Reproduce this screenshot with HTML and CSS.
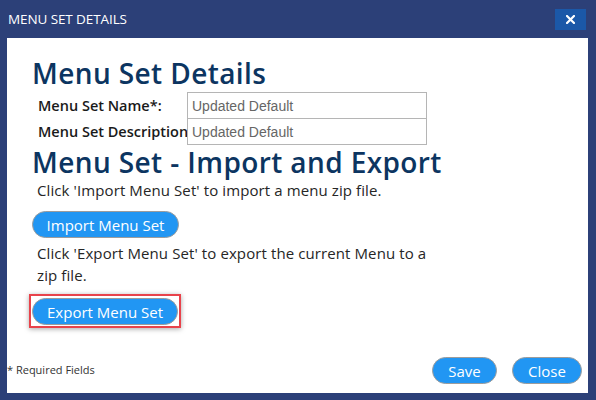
FILE: index.html
```html
<!DOCTYPE html>
<html>
<head>
<meta charset="utf-8">
<link rel="stylesheet" href="styles.css">
</head>
<body>
<div class="dialog">
  <div class="titlebar">
    <span class="title">MENU SET DETAILS</span>
    <button class="close-x" aria-label="Close"><svg width="9" height="9" viewBox="0 0 9 9"><path d="M1 1L8 8M8 1L1 8" stroke="#ffffff" stroke-width="2.2" stroke-linecap="square"/></svg></button>
  </div>
  <div class="panel">
    <div class="content">
      <h1 class="heading">Menu Set Details</h1>
      <div class="form-row">
        <label class="label">Menu Set Name*:</label>
        <input class="field" type="text" value="Updated Default">
      </div>
      <div class="form-row">
        <label class="label">Menu Set Description</label>
        <input class="field" type="text" value="Updated Default">
      </div>
      <h1 class="heading heading-2">Menu Set - Import and Export</h1>
      <p class="help">Click 'Import Menu Set' to import a menu zip file.</p>
      <button class="pill pill-wide">Import Menu Set</button>
      <p class="help help-2">Click 'Export Menu Set' to export the current Menu to a zip file.</p>
      <div class="highlight">
        <button class="pill pill-wide">Export Menu Set</button>
      </div>
    </div>
    <div class="footer">
      <span class="req">* Required Fields</span>
      <div class="actions">
        <button class="pill pill-save">Save</button>
        <button class="pill pill-close">Close</button>
      </div>
    </div>
  </div>
</div>
</body>
</html>
```
FILE: styles.css
```css
* { box-sizing: border-box; }
html, body { margin: 0; padding: 0; }
body {
  width: 596px;
  height: 400px;
  background: #2c4078;
  font-family: "Open Sans", "Noto Sans", sans-serif;
  overflow: hidden;
}
.dialog { display: flex; flex-direction: column; height: 400px; }
.titlebar {
  height: 38px;
  display: flex;
  align-items: flex-start;
  justify-content: space-between;
  padding: 0 10px 0 8px;
}
.title {
  color: #ffffff;
  font-size: 13.5px;
  line-height: 14px;
  margin-top: 12px;
  letter-spacing: -0.1px;
}
.close-x {
  margin-top: 9px;
  width: 31px;
  height: 21px;
  background: #1b58a8;
  border: none;
  padding: 0;
  display: flex;
  align-items: center;
  justify-content: center;
}
.close-x svg { display: block; }
.panel {
  margin: 0 8px 0 7px;
  height: 355px;
  background: #ffffff;
  display: flex;
  flex-direction: column;
}
.content {
  padding: 19px 0 0 25px;
}
.heading {
  margin: 0;
  font-weight: 600;
  font-size: 28px;
  line-height: 32px;
  color: #0c3561;
  letter-spacing: 0.4px;
  white-space: nowrap;
}
.form-row {
  display: flex;
  align-items: center;
  height: 27px;
  margin-left: 6px;
}
.form-row:first-of-type { margin-top: 3px; }
.form-row + .form-row { margin-top: -1px; }
.label {
  width: 149px;
  flex: none;
  font-size: 14.5px;
  font-weight: 600;
  color: #1a1a1a;
  white-space: nowrap;
  overflow: hidden;
}
.field {
  width: 240px;
  height: 27px;
  border: 1px solid #b5b5b5;
  font-family: "Liberation Sans", Arial, sans-serif;
  font-size: 14px;
  color: #666666;
  padding: 0 4px;
  margin: 0;
  outline: none;
}
.heading-2 { margin-top: 1px; }
.help {
  margin: 1px 0 0 5px;
  font-size: 15px;
  line-height: 22px;
  color: #262626;
  letter-spacing: 0.1px;
}
.pill {
  background: #2196f3;
  color: #ffffff;
  border: 1px solid #9c9c9c;
  border-radius: 14px;
  font-family: "Open Sans", "Noto Sans", sans-serif;
  font-size: 15px;
  height: 27px;
  padding: 0;
  display: block;
}
.pill-wide { width: 147px; margin: 10px 0 0 0; }
.help-2 { margin-top: 4px; width: 400px; }
.highlight {
  display: inline-block;
  margin: 8px 0 0 -3px;
  padding: 2px 1px 1px 1px;
  border: 2px solid #e8434b;
  box-shadow: 0 1px 5px rgba(0,0,0,0.35);
}
.highlight .pill { margin: 0; width: 146px; }
.footer {
  margin-top: auto;
  display: flex;
  justify-content: space-between;
  align-items: flex-end;
  padding: 0 6px 9px 0;
}
.req {
  font-size: 11px;
  line-height: 15px;
  color: #333333;
  margin-bottom: 7px;
}
.actions { display: flex; gap: 15px; }
.pill-save { width: 65px; }
.pill-close { width: 70px; }
```
